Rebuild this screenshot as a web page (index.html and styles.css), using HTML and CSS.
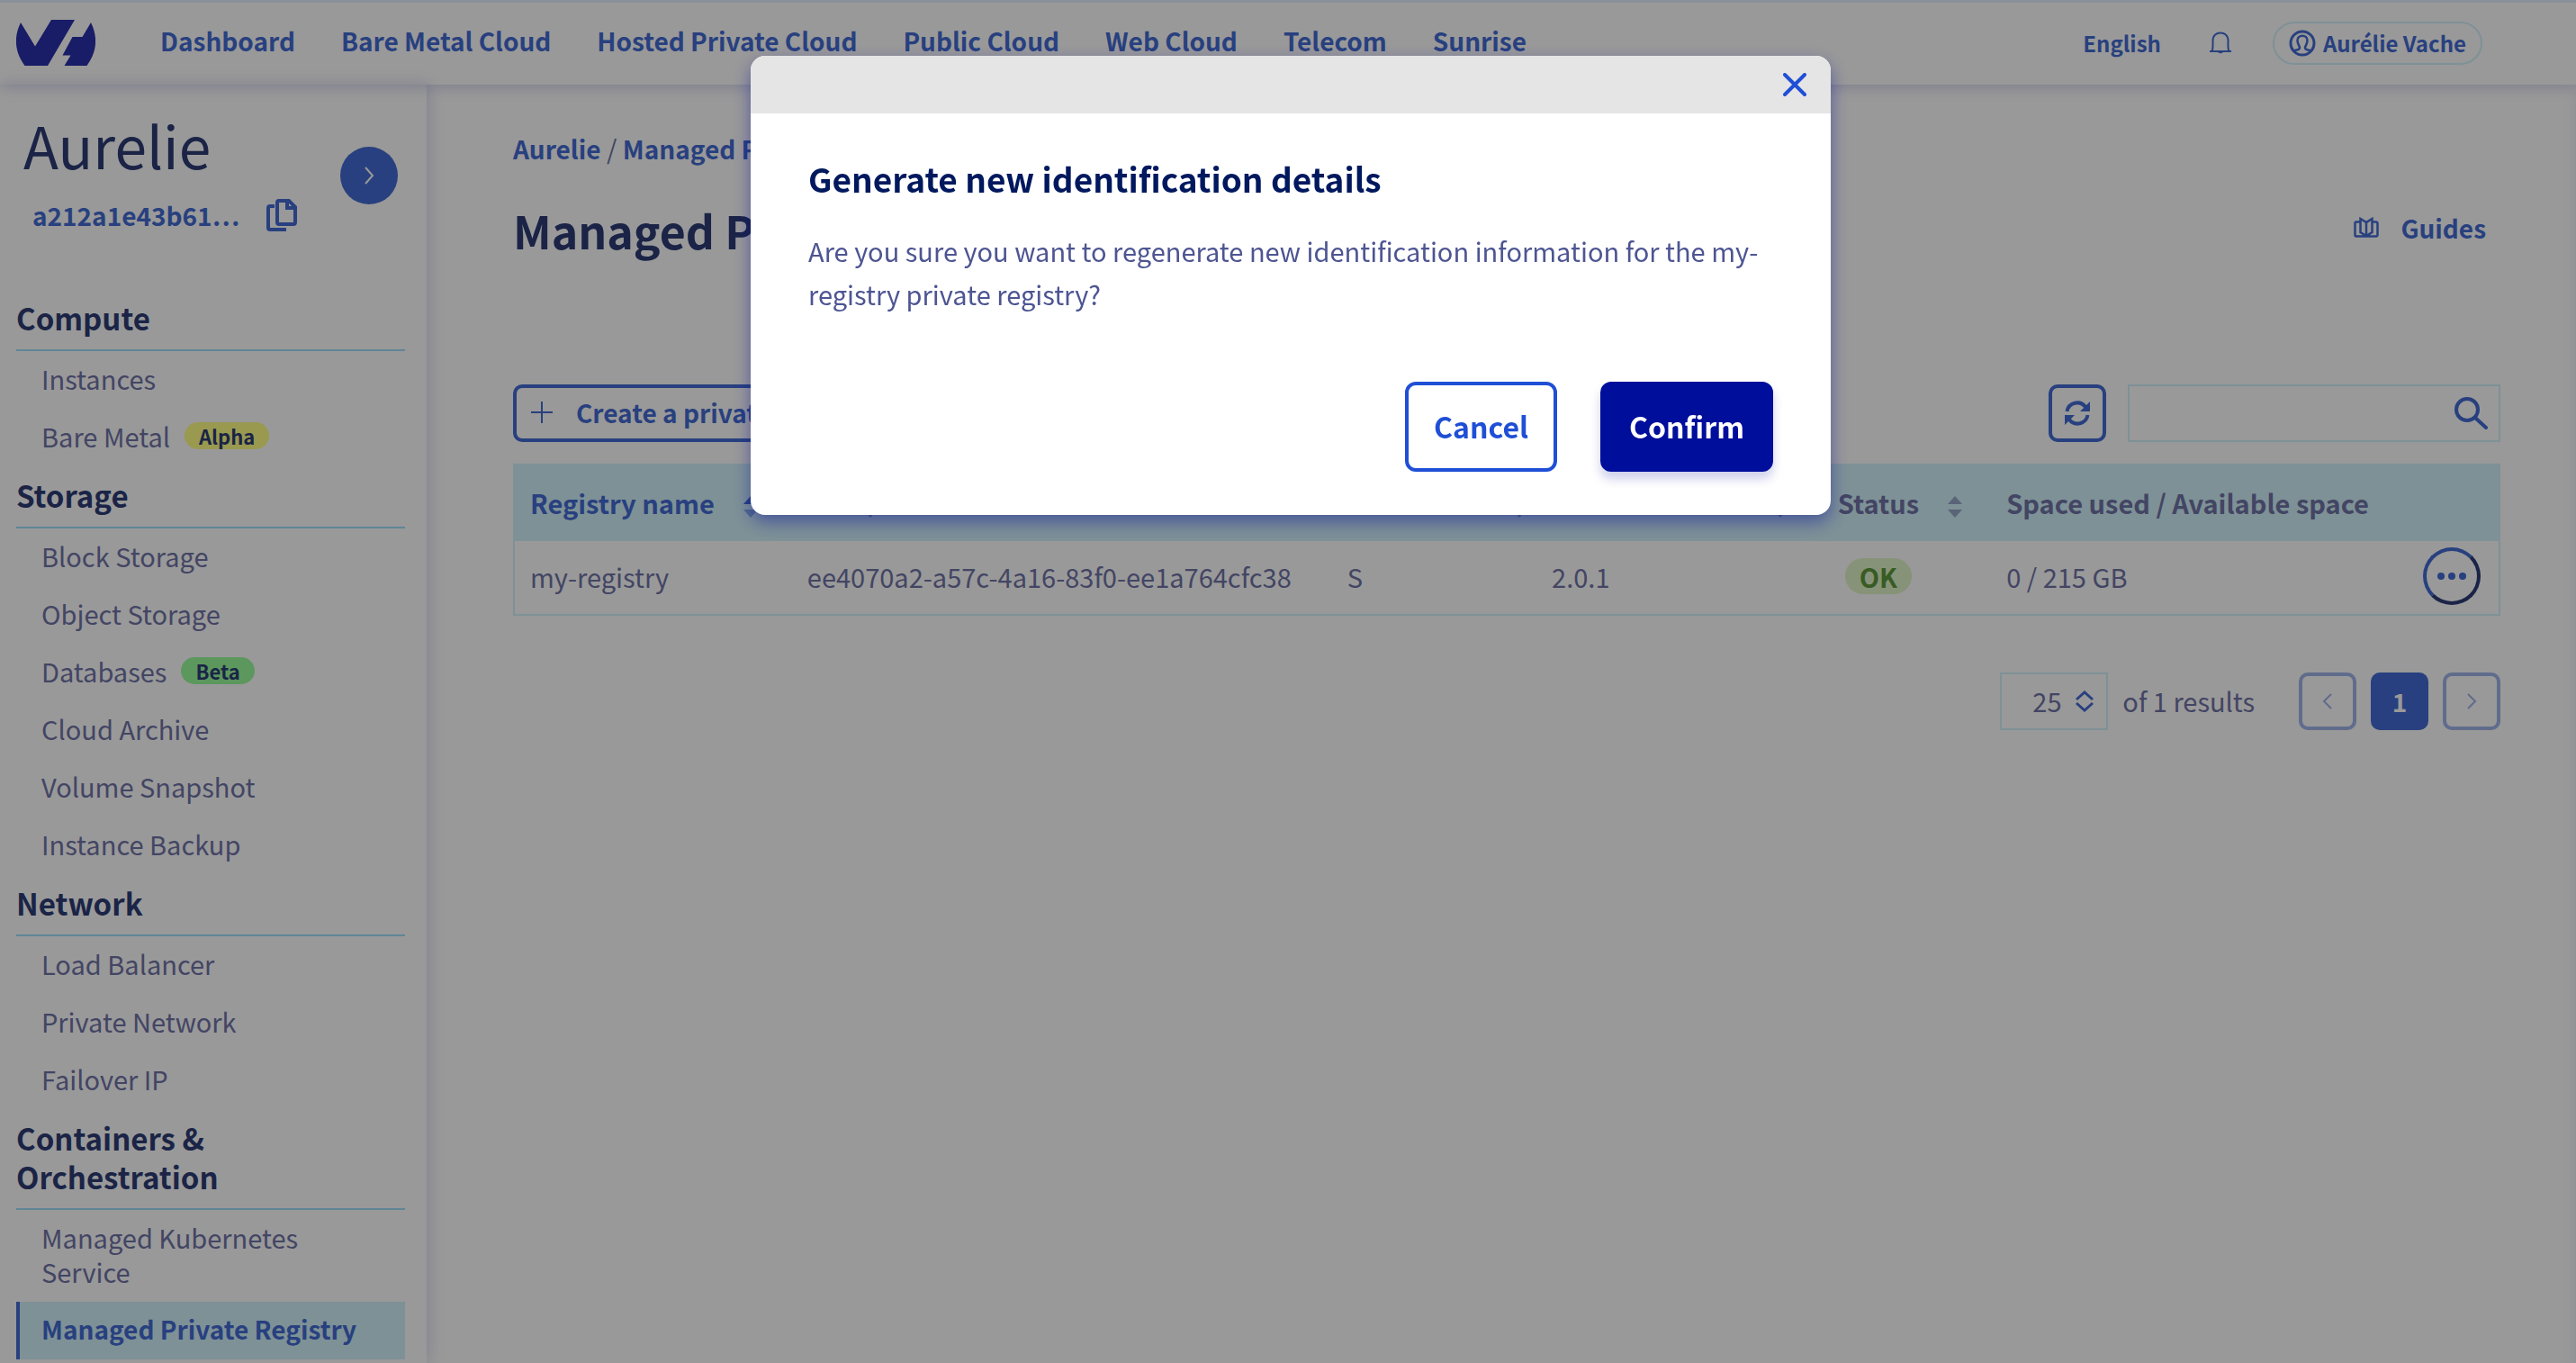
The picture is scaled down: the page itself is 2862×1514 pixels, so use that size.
FILE: index.html
```html
<!DOCTYPE html>
<html lang="en">
<head>
<meta charset="utf-8">
<title>Managed Private Registry</title>
<link rel="stylesheet" href="styles.css">
</head>
<body>
<header class="topbar">
  <a class="logo" href="#" aria-label="Home">
    <svg width="88" height="52" viewBox="0 0 88 52"><path d="M5 3 21 29.500 39 0H65L35 51H9.500C-3 34-2 17 5 3ZM83 3C90 17 91 34 78.500 51H53.500L60.500 39.500H51.500L62.500 19H73.500Z" fill="currentColor"/></svg>
  </a>
  <nav class="topnav" aria-label="Main">
    <a href="#">Dashboard</a><a href="#">Bare Metal Cloud</a><a href="#">Hosted Private Cloud</a><a href="#">Public Cloud</a><a href="#">Web Cloud</a><a href="#">Telecom</a><a href="#">Sunrise</a>
  </nav>
  <div class="tools">
    <button class="plain" type="button">English</button>
    <button class="plain bell" type="button" aria-label="Notifications">
      <svg width="24" height="26" viewBox="0 0 24 26" fill="none" stroke="currentColor" stroke-width="2"><path d="M0 22H24M2.500 22C4 19 3.500 15 3.500 10 3.500-1.500 20.500-1.500 20.500 10 20.500 15 20 19 21.500 22"/><path d="M9 22h6c0 3-6 3-6 0Z" fill="currentColor" stroke="none"/></svg>
    </button>
    <button class="plain user" type="button">
      <svg width="30" height="30" viewBox="0 0 30 30" fill="none" stroke="currentColor" stroke-width="3"><circle cx="15" cy="15" r="13"/><path stroke-width="2.500" d="M5.500 23.500C8 22 12 23 12 20 12 18 9.500 16 9.500 12 9.500 5 20.500 5 20.500 12 20.500 16 18 18 18 20 18 23 22 22 24.500 23.500"/></svg>
      Aurélie Vache
    </button>
  </div>
</header>
<div class="shell">
  <aside class="sidebar">
    <div class="project">
      <div>
        <h2 class="project-name">Aurelie</h2>
        <p class="project-id"><a href="#">a212a1e43b61…</a>
          <button class="plain" type="button" aria-label="Copy">
            <svg width="34" height="36" viewBox="0 0 34 36" fill="none" stroke="currentColor" stroke-width="4"><path d="M14 2h11l7 7v17a2 2 0 0 1-2 2H14a2 2 0 0 1-2-2V4a2 2 0 0 1 2-2ZM23 3v7h8M9 8H4a2 2 0 0 0-2 2v22a2 2 0 0 0 2 2h18"/></svg>
          </button>
        </p>
      </div>
      <button class="expand" type="button" aria-label="Expand"><svg width="12" height="20" viewBox="0 0 12 20" fill="none" stroke="currentColor" stroke-width="2"><path d="M2 1l8 9-8 9"/></svg></button>
    </div>
    <nav class="menu" aria-label="Project">
      <h3>Compute</h3>
      <ul><li><a href="#">Instances</a></li><li><a href="#">Bare Metal <span class="tag alpha">Alpha</span></a></li></ul>
      <h3>Storage</h3>
      <ul><li><a href="#">Block Storage</a></li><li><a href="#">Object Storage</a></li><li><a href="#">Databases <span class="tag beta">Beta</span></a></li><li><a href="#">Cloud Archive</a></li><li><a href="#">Volume Snapshot</a></li><li><a href="#">Instance Backup</a></li></ul>
      <h3>Network</h3>
      <ul><li><a href="#">Load Balancer</a></li><li><a href="#">Private Network</a></li><li><a href="#">Failover IP</a></li></ul>
      <h3>Containers &amp; Orchestration</h3>
      <ul><li><a href="#">Managed Kubernetes Service</a></li><li><a class="active" href="#" aria-current="page">Managed Private Registry</a></li></ul>
    </nav>
  </aside>
  <main class="content">
    <p class="crumbs"><a href="#">Aurelie</a> / <a href="#">Managed Private Registry</a></p>
    <div class="heading">
      <h1>Managed Private Registry</h1>
      <a class="guides" href="#"><svg width="28" height="24" viewBox="0 0 28 24" fill="none" stroke="currentColor" stroke-width="2.500"><path d="M7 5.500H3a1.500 1.500 0 0 0-1.500 1.500v13A1.500 1.500 0 0 0 3 21.500h22a1.500 1.500 0 0 0 1.500-1.500V7A1.500 1.500 0 0 0 25 5.500h-4M14 6v15M14 6 7.500 2v15l6.500 4 6.500-4V2Z"/></svg>Guides</a>
    </div>
    <div class="actions">
      <button class="btn create" type="button"><svg width="24" height="24" viewBox="0 0 24 24" stroke="currentColor" stroke-width="2"><path d="M0 12h24M12 0v24"/></svg>Create a private registry</button>
      <div class="filters">
        <button class="btn square" type="button" aria-label="Refresh"><svg width="28" height="28" viewBox="0 0 28 28" fill="none" stroke="currentColor" stroke-width="4"><path d="M2.500 12A11.500 11.500 0 0 1 23 7M25.500 16A11.500 11.500 0 0 1 5 21"/><path d="M28 1v11H17ZM0 27V16H11Z" fill="currentColor" stroke="none"/></svg></button>
        <label class="search"><input type="search" aria-label="Search"><svg width="38" height="38" viewBox="0 0 38 38" fill="none" stroke="currentColor" stroke-width="4"><circle cx="15" cy="15" r="12"/><path d="M24 24l12 11" stroke-linecap="round"/></svg></label>
      </div>
    </div>
    <table class="grid">
      <colgroup><col class="c-name"><col class="c-id"><col class="c-plan"><col class="c-version"><col class="c-status"><col class="c-space"><col></colgroup>
      <thead><tr>
        <th class="sorted">Registry name<svg class="sort" viewBox="0 0 16 24"><path d="M0 9 8 0l8 9Z"/><path opacity=".5" d="M0 15h16l-8 9Z"/></svg></th>
        <th>ID<svg class="sort dim" viewBox="0 0 16 24"><path d="M0 9 8 0l8 9ZM0 15h16l-8 9Z"/></svg></th>
        <th>Plan name<svg class="sort dim" viewBox="0 0 16 24"><path d="M0 9 8 0l8 9ZM0 15h16l-8 9Z"/></svg></th>
        <th>Harbor version<svg class="sort dim" viewBox="0 0 16 24"><path d="M0 9 8 0l8 9ZM0 15h16l-8 9Z"/></svg></th>
        <th>Status<svg class="sort dim" viewBox="0 0 16 24"><path d="M0 9 8 0l8 9ZM0 15h16l-8 9Z"/></svg></th>
        <th>Space used / Available space</th>
        <th></th>
      </tr></thead>
      <tbody><tr>
        <td>my-registry</td><td>ee4070a2-a57c-4a16-83f0-ee1a764cfc38</td><td>S</td><td>2.0.1</td><td><span class="ok">OK</span></td><td>0 / 215 GB</td>
        <td class="more"><button type="button" aria-label="Actions"><svg width="32" height="8" viewBox="0 0 32 8" fill="currentColor"><circle cx="4" cy="4" r="4"/><circle cx="16" cy="4" r="4"/><circle cx="28" cy="4" r="4"/></svg></button></td>
      </tr></tbody>
    </table>
    <div class="pager">
      <div class="size"><select aria-label="Rows per page"><option>25</option></select><svg width="20" height="24" viewBox="0 0 20 24" fill="none" stroke="currentColor" stroke-width="3"><path d="M1 10l9-8 9 8M1 14l9 8 9-8"/></svg></div>
      <span class="results">of 1 results</span>
      <div class="pages">
        <button class="btn square off" type="button" aria-label="Previous"><svg width="12" height="18" viewBox="0 0 12 18" fill="none" stroke="currentColor" stroke-width="2"><path d="M10 1 2 9l8 8"/></svg></button>
        <button class="btn square current" type="button">1</button>
        <button class="btn square off" type="button" aria-label="Next"><svg width="12" height="18" viewBox="0 0 12 18" fill="none" stroke="currentColor" stroke-width="2"><path d="M2 1l8 8-8 8"/></svg></button>
      </div>
    </div>
  </main>
</div>
<div class="backdrop">
  <section class="modal" role="dialog" aria-modal="true" aria-labelledby="dialog-title">
    <div class="modal-top"><button class="close" type="button" aria-label="Close"><svg width="26" height="26" viewBox="0 0 26 26" stroke="currentColor" stroke-width="4" stroke-linecap="round"><path d="M2 2l22 22M24 2 2 24"/></svg></button></div>
    <div class="modal-body">
      <h2 id="dialog-title">Generate new identification details</h2>
      <p>Are you sure you want to regenerate new identification information for the my-registry private registry?</p>
      <div class="modal-actions"><button class="cancel" type="button">Cancel</button><button class="confirm" type="button">Confirm</button></div>
    </div>
  </section>
</div>
</body>
</html>
```
FILE: styles.css
```css
:root {
  --blue: #436bd4;
  --ink: #2d3c76;
  --text: #7073a7;
  --pale: #d2f2fa;
}

* { box-sizing: border-box; }

body {
  margin: 0;
  height: 100vh;
  overflow: hidden;
  display: flex;
  flex-direction: column;
  background: #fff;
  color: var(--text);
  font: 29px/40px "Noto Sans CJK SC", "Noto Sans CJK JP", sans-serif;
}

h1, h2, h3, p, ul { margin: 0; padding: 0; }
ul { list-style: none; }
a { color: var(--blue); text-decoration: none; }
button, input, select { font: inherit; color: inherit; }
svg { flex: none; }

.plain {
  padding: 0;
  border: 0;
  background: none;
  color: var(--blue);
  display: flex;
  align-items: center;
}

.topbar {
  position: relative;
  flex: none;
  height: 94px;
  padding: 0 104px 0 18px;
  display: flex;
  align-items: center;
  border-top: 3px solid #e5f0ff;
  box-shadow: 0 2px 16px rgba(0, 14, 156, .2);
  font-size: 28px;
  font-weight: 700;
}
.logo { display: flex; padding-bottom: 2px; color: #2b2faa; }
.topnav { display: flex; gap: 51px; margin-left: 72px; padding-bottom: 7px; }
.tools { margin-left: auto; padding-bottom: 2px; display: flex; align-items: center; font-size: 24px; }
.bell { margin: 0 46px 0 54px; }
.user {
  height: 48px;
  padding: 0 16px;
  gap: 8px;
  border: 2px solid var(--pale);
  border-radius: 24px;
}

.shell { flex: 1; min-height: 0; display: flex; }
.sidebar {
  flex: none;
  width: 474px;
  padding: 32px 24px 0 18px;
  box-shadow: 2px 0 16px rgba(0, 14, 156, .16);
}
.project { display: flex; align-items: center; justify-content: space-between; padding: 0 8px; }
.project-name { color: var(--ink); font-size: 64px; line-height: 68px; font-weight: 400; }
.project-id { display: flex; align-items: center; gap: 30px; padding: 25px 0 0 10px; font-size: 28px; font-weight: 700; }
.expand {
  width: 64px;
  height: 64px;
  margin-top: 5px;
  padding: 0;
  border: 0;
  border-radius: 50%;
  background: var(--blue);
  color: #fff;
  display: flex;
  align-items: center;
  justify-content: center;
}

.menu { padding-top: 62px; }
.menu h3 {
  padding: 11px 0 13px;
  border-bottom: 2px solid #a0defa;
  color: var(--ink);
  font-size: 33px;
  line-height: 43px;
}
.menu a {
  display: flex;
  align-items: center;
  gap: 16px;
  padding: 11px 24px 15px 28px;
  color: var(--text);
  line-height: 38px;
}
.menu .active {
  padding-left: 24px;
  border-left: 4px solid var(--blue);
  background: var(--pale);
  color: var(--blue);
  font-size: 28px;
  font-weight: 700;
}
.tag { padding: 0 16px; border-radius: 15px; color: var(--ink); font-size: 22px; line-height: 30px; font-weight: 700; }
.alpha { background: #ffff85; }
.beta { background: #99fc9d; }

.content {
  flex: 1;
  min-width: 0;
  padding: 50px 84px 0 96px;
  box-shadow: inset -12px 0 16px -12px rgba(0, 14, 156, .08);
}
.crumbs a { font-size: 28px; font-weight: 700; }
.heading { display: flex; align-items: center; justify-content: space-between; margin-top: 40px; }
h1 { color: var(--ink); font-size: 50px; line-height: 60px; }
.guides { display: flex; align-items: center; gap: 24px; padding: 0 16px 5px 0; font-size: 28px; font-weight: 700; }
.actions, .filters, .pager, .pages { display: flex; align-items: center; }
.actions { justify-content: space-between; margin-top: 142px; }
.btn {
  height: 64px;
  padding: 0 20px 2px;
  border: 4px solid var(--blue);
  border-radius: 10px;
  background: none;
  color: var(--blue);
  font-size: 28px;
  font-weight: 700;
  display: flex;
  align-items: center;
  justify-content: center;
}
.create { gap: 26px; padding: 0 16px 2px; }
.square { width: 64px; padding: 0; }
.filters { gap: 24px; }
.search {
  width: 414px;
  height: 64px;
  padding-right: 12px;
  display: flex;
  align-items: center;
  border: 2px solid var(--pale);
  color: var(--blue);
}
.search input { flex: 1; min-width: 0; border: 0; background: none; }

.grid {
  width: 100%;
  margin-top: 24px;
  table-layout: fixed;
  border-collapse: collapse;
  border: 2px solid var(--pale);
}
.c-name { width: 14%; }
.c-id { width: 27.2%; }
.c-plan { width: 10.3%; }
.c-version { width: 14.4%; }
.c-status { width: 8.5%; }
.c-space { width: 20%; }
th, td { padding: 0 20px 3px 17px; text-align: left; white-space: nowrap; }
th { height: 85px; background: var(--pale); font-weight: 700; }
td { height: 82px; }
.sorted { color: var(--blue); }
.sort { width: 16px; height: 24px; margin-left: 32px; vertical-align: -4px; fill: currentColor; }
.dim { opacity: .6; }
.ok {
  display: inline-block;
  margin-left: 8px;
  padding: 0 16px;
  border-radius: 20px;
  background: #e2f5c8;
  color: #5c9a3c;
  font-weight: 700;
}
.more button {
  width: 64px;
  height: 64px;
  margin-left: auto;
  padding: 0;
  border: 4px solid var(--blue);
  border-radius: 50%;
  border-right-color: var(--ink);
  border-bottom-color: var(--ink);
  background: none;
  color: var(--blue);
  display: flex;
  align-items: center;
  justify-content: center;
}

.pager { justify-content: flex-end; margin-top: 63px; }
.size {
  width: 120px;
  height: 64px;
  margin-right: 16px;
  padding-right: 14px;
  display: flex;
  align-items: center;
  border: 2px solid var(--pale);
  color: var(--blue);
}
.size select { flex: 1; min-width: 0; height: 60px; padding: 0 0 2px 34px; border: 0; background: none; appearance: none; color: var(--text); }
.results { padding-bottom: 2px; }
.pages { gap: 16px; margin-left: 49px; }
.off { opacity: .5; }
.current { background: var(--blue); color: #fff; font-weight: 700; }

.backdrop {
  position: fixed;
  inset: 0;
  padding: 62px 0 0 6px;
  background: rgba(0, 0, 0, .4);
}
.modal {
  width: 1200px;
  max-width: 96%;
  margin: 0 auto;
  overflow: hidden;
  border-radius: 16px;
  background: #fff;
  box-shadow: 0 8px 20px rgba(0, 14, 156, .45);
  color: #4d5592;
}
.modal-top { height: 64px; padding-right: 27px; display: flex; align-items: center; justify-content: flex-end; background: #e5e5e5; }
.close { padding: 0; border: 0; background: none; color: #1f4fd6; display: flex; }
.modal-body { padding: 46px 64px 48px; }
.modal-body h2 { color: #00185e; font-size: 37px; line-height: 52px; }
.modal-body p { margin-top: 30px; line-height: 48px; }
.modal-actions { display: flex; justify-content: flex-end; gap: 48px; margin-top: 74px; }
.modal-actions button { height: 100px; padding: 0 28px 3px; border: 4px solid #1f4fd6; border-radius: 12px; background: #fff; color: #1f4fd6; font-size: 32px; font-weight: 700; }
.modal-actions .confirm { border-color: #000e9c; background: #000e9c; color: #fff; box-shadow: 0 8px 12px rgba(0, 14, 156, .2); }
```
